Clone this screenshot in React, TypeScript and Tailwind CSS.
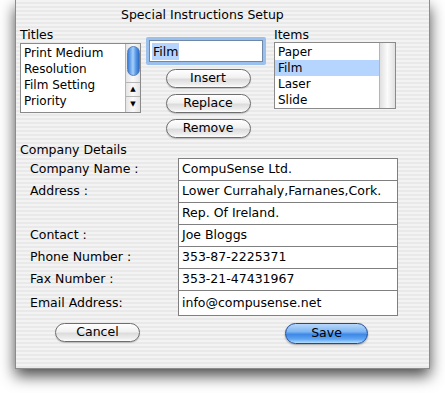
import React from "react";

const font = "font-['DejaVu_Sans','Liberation_Sans',sans-serif]";

const titles = ["Print Medium", "Resolution", "Film Setting", "Priority"];
const items = ["Paper", "Film", "Laser", "Slide"];

const details: { label: string; value: string; tall?: boolean }[] = [
  { label: "Company Name :", value: "CompuSense Ltd." },
  { label: "Address :", value: "Lower Currahaly,Farnanes,Cork." },
  { label: "", value: "Rep. Of Ireland." },
  { label: "Contact :", value: "Joe Bloggs" },
  { label: "Phone Number :", value: "353-87-2225371" },
  { label: "Fax Number :", value: "353-21-47431967" },
  { label: "Email Address:", value: "info@compusense.net", tall: true },
];

function AquaButton({ children, primary }: { children: React.ReactNode; primary?: boolean }) {
  return (
    <button
      className={
        primary
          ? "flex h-[21px] w-[83px] items-center justify-center rounded-full border border-[#1f4a94] bg-[linear-gradient(180deg,#b9d8fb_0%,#7fb6f2_40%,#3f88e6_55%,#5fa6f3_80%,#b6deff_100%)] text-[12.5px] text-black shadow-[0_1px_2px_rgba(0,0,0,0.35)]"
          : "flex h-[19px] w-[85px] items-center justify-center rounded-full border border-[#6e6e6e] bg-[linear-gradient(180deg,#ffffff_0%,#f1f1f1_45%,#dcdcdc_55%,#eeeeee_85%,#ffffff_100%)] text-[12.5px] text-black shadow-[0_1px_1px_rgba(0,0,0,0.2)]"
      }
    >
      {children}
    </button>
  );
}

export default function App() {
  return (
    <main className={`h-[393px] w-[445px] overflow-hidden bg-white ${font} text-black`}>
      <div className="ml-[15px] h-[369px] w-[415px] border-x border-b border-[#8c8c8c] bg-[repeating-linear-gradient(180deg,#f3f3f3_0px,#f3f3f3_2px,#e9e9e9_2px,#e9e9e9_4px)] pt-[7px] shadow-[0_7px_14px_rgba(0,0,0,0.7)]">
        <div className="h-[16px] pl-[105px] text-[12.5px] leading-[16px]">Special Instructions Setup</div>

        <div className="mt-[5px] flex items-start">
          <div className="ml-[4px] w-[121px]">
            <div className="h-[13px] text-[12.5px] leading-[13px]">Titles</div>
            <div className="mt-[2px] flex h-[70px] border border-[#8a8a8a] bg-white">
              <div className="flex-1 pl-[3px] pt-px">
                {titles.map((t) => (
                  <div key={t} className="h-[16px] text-[12px] leading-[16px]">
                    {t}
                  </div>
                ))}
              </div>
              <div className="flex w-[15px] flex-col border-l border-[#b5b5b5] bg-[linear-gradient(90deg,#e4e4e4,#fafafa_50%,#e4e4e4)]">
                <div className="mx-auto mt-[2px] h-[30px] w-[13px] rounded-full border border-[#5a7fb8] bg-[linear-gradient(90deg,#3c7fd8,#a6d0fb_45%,#5b9be8_70%,#2f6cc6)]" />
                <div className="flex-1" />
                <div className="flex h-[14px] items-center justify-center border-t border-[#b5b5b5] text-[7px] leading-none">▲</div>
                <div className="flex h-[16px] items-center justify-center border-t border-[#b5b5b5] text-[7px] leading-none">▼</div>
              </div>
            </div>
          </div>

          <div className="ml-[5px] mt-[9px] w-[120px]">
            <div className="h-[28px] rounded-[2px] bg-[#9cc0ec] p-[3px]">
              <div className="flex h-full items-center border border-[#6f87a8] bg-white pl-[2px]">
                <span className="bg-[#b5d5ff] px-px text-[12.5px] leading-[17px]">Film</span>
              </div>
            </div>
            <div className="mt-[4px] flex flex-col items-center gap-[6px] pl-[4px]">
              <AquaButton>Insert</AquaButton>
              <AquaButton>Replace</AquaButton>
              <AquaButton>Remove</AquaButton>
            </div>
          </div>

          <div className="ml-[8px] w-[122px]">
            <div className="h-[13px] text-[12.5px] leading-[13px]">Items</div>
            <div className="mt-px flex h-[67px] border border-[#8a8a8a] bg-white">
              <div className="flex-1 pt-px">
                {items.map((t) => (
                  <div
                    key={t}
                    className={`h-[16px] pl-[3px] text-[12px] leading-[16px] ${t === "Film" ? "bg-[#b5d5ff]" : ""}`}
                  >
                    {t}
                  </div>
                ))}
              </div>
              <div className="w-[16px] border-l border-[#b5b5b5] bg-[linear-gradient(90deg,#e0e0e0,#fbfbfb_50%,#e0e0e0)]" />
            </div>
          </div>
        </div>

        <div className="mt-[5px] ml-[4px] h-[14px] text-[12.5px] leading-[14px]">Company Details</div>

        <div className="mt-px">
          {details.map((d, i) => (
            <div key={i} className={`flex ${d.tall ? "h-[26px]" : "h-[22px]"}`}>
              <div className="ml-[14px] flex w-[148px] items-center text-[12.5px]">{d.label}</div>
              <div
                className={`flex w-[220px] items-center border-x border-t border-[#7f7f7f] bg-white pl-[3px] text-[12.5px] ${
                  d.tall ? "border-b" : ""
                }`}
              >
                {d.value}
              </div>
            </div>
          ))}
        </div>

        <div className="mt-[7px] flex">
          <div className="ml-[39px]">
            <AquaButton>Cancel</AquaButton>
          </div>
          <div className="ml-[145px]">
            <AquaButton primary>Save</AquaButton>
          </div>
        </div>
      </div>
    </main>
  );
}
